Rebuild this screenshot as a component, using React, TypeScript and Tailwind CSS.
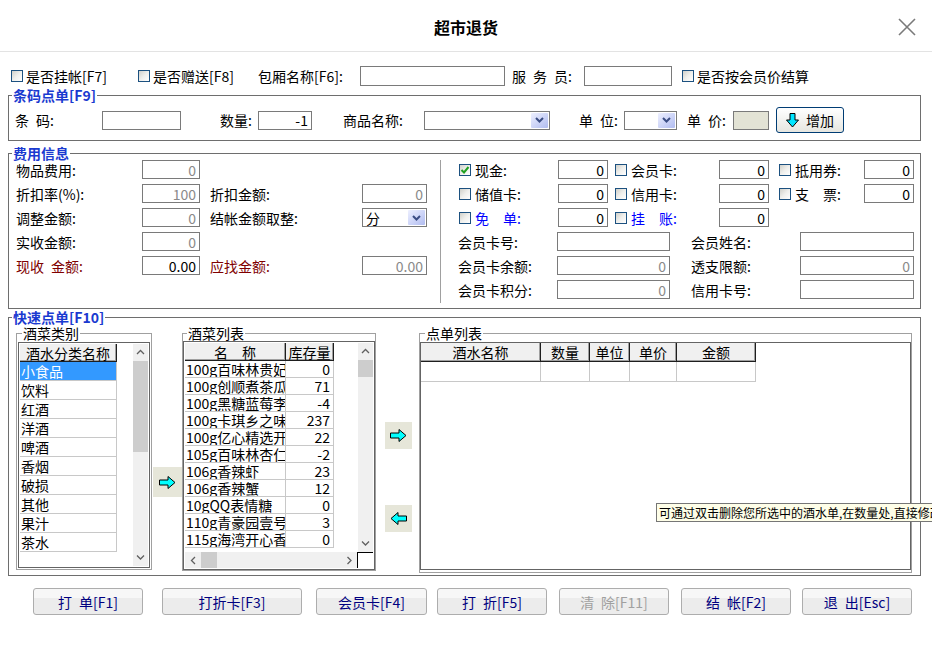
import React from 'react';

const CATEGORIES = ['小食品', '饮料', '红酒', '洋酒', '啤酒', '香烟', '破损', '其他', '果汁', '茶水'];

const ITEMS: [string, string][] = [
  ['100g百味林贵妃小核桃', '0'],
  ['100g创顺煮茶瓜子', '71'],
  ['100g黑糖蓝莓李子', '-4'],
  ['100g卡琪乡之味梅', '237'],
  ['100g亿心精选开心果', '22'],
  ['105g百味林杏仁', '-2'],
  ['106g香辣虾', '23'],
  ['106g香辣蟹', '12'],
  ['10gQQ表情糖', '0'],
  ['110g青豪园壹号花生', '3'],
  ['115g海湾开心香瓜子', '0'],
];

// header cell of a list view; height comes from the row it sits in
const HEAD =
  'shrink-0 bg-[#f0f0f0] border-r border-b border-[#1e1e1e] shadow-[inset_-1px_-1px_0_#a0a0a0] flex items-center justify-center';
const CELL = 'shrink-0 border-r border-b border-[#c8c8c8]';
const BIG_LEGEND = 'ml-[3px] px-[1px] text-[14px] leading-[14px] font-bold text-[#1a3ad0]';
const SMALL_LEGEND = 'px-[1px] text-[14px] leading-[14px]';

function Check({ checked }: { checked?: boolean }) {
  return (
    <span className="inline-flex items-center justify-center w-[12px] h-[12px] shrink-0 border border-[#1c5180] bg-linear-to-br from-[#d0d0ca] via-[#efefec] to-white">
      {checked && (
        <svg width="10" height="10" viewBox="0 0 10 10">
          <path d="M1.5 5L4 7.5L8.5 2" stroke="#21a121" strokeWidth="2" fill="none" />
        </svg>
      )}
    </span>
  );
}

function Field({ className = '', value, muted }: { className?: string; value?: string; muted?: boolean }) {
  return (
    <div
      className={`h-[19px] shrink-0 border border-[#7a7a7a] flex items-center justify-end pr-[3px] leading-none ${
        muted ? 'text-[#8a8a8a]' : 'text-black'
      } ${className}`}
    >
      {value}
    </div>
  );
}

function Combo({ className = '', value }: { className?: string; value?: string }) {
  return (
    <div className={`h-[19px] shrink-0 border border-[#7a7a7a] bg-white flex items-center ${className}`}>
      <span className="flex-1 pl-[3px] leading-none">{value}</span>
      <span className="w-[17px] h-[15px] mr-[1px] rounded-[1px] bg-linear-to-br from-[#eef0ff] to-[#b1bcf0] flex items-center justify-center">
        <svg width="9" height="6" viewBox="0 0 9 6">
          <path d="M1 1L4.5 4.5L8 1" stroke="#3b4d84" strokeWidth="2" fill="none" />
        </svg>
      </span>
    </div>
  );
}

function Chev({ dir }: { dir: 'up' | 'down' | 'left' | 'right' }) {
  const d = {
    up: 'M1 5L4.5 1.5L8 5',
    down: 'M1 1.5L4.5 5L8 1.5',
    left: 'M5 1L1.5 4.5L5 8',
    right: 'M1.5 1L5 4.5L1.5 8',
  }[dir];
  const horiz = dir === 'left' || dir === 'right';
  return (
    <svg width={horiz ? 7 : 9} height={horiz ? 9 : 7} viewBox={horiz ? '0 0 7 9' : '0 0 9 7'}>
      <path d={d} stroke="#606060" strokeWidth="1.3" fill="none" />
    </svg>
  );
}

function VScroll({ thumb }: { thumb: string }) {
  return (
    <div className="w-[15px] shrink-0 bg-[#f0f0f0] flex flex-col">
      <div className="h-[17px] shrink-0 flex items-center justify-center">
        <Chev dir="up" />
      </div>
      <div className={`${thumb} shrink-0 bg-[#cdcdcd]`} />
      <div className="flex-1" />
      <div className="h-[17px] shrink-0 flex items-center justify-center">
        <Chev dir="down" />
      </div>
    </div>
  );
}

function ArrowRight() {
  return (
    <svg width="17" height="13" viewBox="0 0 17 13">
      <polygon points="0.5,4 9,4 9,0.5 16,6.5 9,12.5 9,9 0.5,9" fill="#00ffff" stroke="#000" strokeWidth="1" />
    </svg>
  );
}

function ArrowLeft() {
  return (
    <svg width="17" height="13" viewBox="0 0 17 13">
      <polygon points="16.5,4 8,4 8,0.5 1,6.5 8,12.5 8,9 16.5,9" fill="#00ffff" stroke="#000" strokeWidth="1" />
    </svg>
  );
}

function Btn({ className = '', label, disabled }: { className?: string; label: string; disabled?: boolean }) {
  return (
    <div
      className={`h-[27px] shrink-0 rounded-[3px] border border-[#adadad] bg-[linear-gradient(#f7f7f7_0%,#f7f7f7_35%,#ececec_35%,#ececec_100%)] flex items-center justify-center ${
        disabled ? 'text-[#a0a0a0]' : 'text-[#000080]'
      } ${className}`}
    >
      {label}
    </div>
  );
}

export default function App() {
  return (
    <div className="relative w-[932px] h-[649px] overflow-hidden bg-white text-black text-[14px] leading-[16px] font-['Noto_Sans_CJK_SC',sans-serif]">
      {/* Title bar */}
      <div className="h-[52px] border-b border-[#e3e3e3] grid grid-cols-[1fr_auto_1fr] items-center">
        <div />
        <div className="text-[16px] font-bold leading-[20px] mt-[2px]">超市退货</div>
        <div className="flex justify-end pr-[16px] mt-[2px]">
          <svg width="18" height="18" viewBox="0 0 18 18">
            <path d="M1 1L17 17M17 1L1 17" stroke="#7a7a7a" strokeWidth="1.6" />
          </svg>
        </div>
      </div>

      {/* Options row */}
      <div className="mt-[14px] h-[20px] flex items-center">
        <div className="ml-[11px] w-[127px] shrink-0 flex items-center gap-[3px]">
          <Check />
          <span>是否挂帐[F7]</span>
        </div>
        <div className="w-[120px] shrink-0 flex items-center gap-[3px]">
          <Check />
          <span>是否赠送[F8]</span>
        </div>
        <span className="w-[102px] shrink-0">包厢名称[F6]:</span>
        <Field className="w-[145px] h-[20px]" />
        <span className="ml-[7px] w-[72px] shrink-0">{'服\u2002务\u2002员:'}</span>
        <Field className="w-[88px] h-[20px]" />
        <div className="ml-[10px] flex items-center gap-[3px]">
          <Check />
          <span>是否按会员价结算</span>
        </div>
      </div>

      {/* 条码点单 */}
      <fieldset className="ml-[8px] mt-[2px] w-[913px] h-[53px] border border-[#6e6e6e]">
        <legend className={BIG_LEGEND}>条码点单[F9]</legend>
        <div className="mt-[5px] h-[26px] flex items-center">
          <span className="ml-[6px] w-[87px] shrink-0">{'条\u2002码:'}</span>
          <Field className="w-[79px]" />
          <span className="ml-[39px] w-[38px] shrink-0">数量:</span>
          <Field className="w-[54px]" value="-1" />
          <span className="ml-[31px] w-[81px] shrink-0">商品名称:</span>
          <Combo className="w-[126px]" />
          <span className="ml-[29px] w-[45px] shrink-0">{'单\u2002位:'}</span>
          <Combo className="w-[53px]" />
          <span className="ml-[10px] w-[46px] shrink-0">{'单\u2002价:'}</span>
          <Field className="w-[36px] bg-[#e3e3d5]" />
          <div className="ml-[7px] w-[68px] h-[26px] rounded-[3px] border border-[#003c74] bg-linear-to-b from-white to-[#e6e6e0] flex items-center justify-center gap-[7px]">
            <svg width="13" height="15" viewBox="0 0 13 15">
              <polygon points="4,0.5 9,0.5 9,7 12.5,7 6.5,14 0.5,7 4,7" fill="#00e5ff" stroke="#000" strokeWidth="1" />
            </svg>
            <span>增加</span>
          </div>
        </div>
      </fieldset>

      {/* 费用信息 */}
      <fieldset className="ml-[8px] mt-[5px] w-[913px] h-[163px] border border-[#6e6e6e]">
        <legend className={BIG_LEGEND}>费用信息</legend>
        <div className="flex">
          <div className="w-[431px] shrink-0 pl-[7px] flex flex-col gap-[5px]">
            <div className="h-[19px] flex items-center">
              <span className="w-[126px] shrink-0">物品费用:</span>
              <Field className="w-[58px]" value="0" muted />
            </div>
            <div className="h-[19px] flex items-center">
              <span className="w-[126px] shrink-0">折扣率(%):</span>
              <Field className="w-[58px]" value="100" muted />
              <span className="ml-[10px] w-[152px] shrink-0">折扣金额:</span>
              <Field className="w-[65px]" value="0" muted />
            </div>
            <div className="h-[19px] flex items-center">
              <span className="w-[126px] shrink-0">调整金额:</span>
              <Field className="w-[58px]" value="0" muted />
              <span className="ml-[10px] w-[152px] shrink-0">结帐金额取整:</span>
              <Combo className="w-[65px]" value="分" />
            </div>
            <div className="h-[19px] flex items-center">
              <span className="w-[126px] shrink-0">实收金额:</span>
              <Field className="w-[58px]" value="0" muted />
            </div>
            <div className="h-[19px] flex items-center">
              <span className="w-[126px] shrink-0 text-[#800000]">{'现收\u2002金额:'}</span>
              <Field className="w-[58px]" value="0.00" />
              <span className="ml-[10px] w-[152px] shrink-0 text-[#800000]">应找金额:</span>
              <Field className="w-[65px]" value="0.00" muted />
            </div>
          </div>

          <div className="w-px h-[143px] shrink-0 bg-[#a0a0a0]" />

          <div className="pl-[18px] flex flex-col gap-[5px]">
            <div className="h-[19px] flex items-center">
              <div className="w-[99px] shrink-0 flex items-center gap-[4px]">
                <Check checked />
                <span>现金:</span>
              </div>
              <Field className="w-[50px]" value="0" />
              <div className="ml-[7px] w-[104px] shrink-0 flex items-center gap-[4px]">
                <Check />
                <span>会员卡:</span>
              </div>
              <Field className="w-[50px]" value="0" />
              <div className="ml-[10px] w-[85px] shrink-0 flex items-center gap-[4px]">
                <Check />
                <span>抵用券:</span>
              </div>
              <Field className="w-[50px]" value="0" />
            </div>
            <div className="h-[19px] flex items-center">
              <div className="w-[99px] shrink-0 flex items-center gap-[4px]">
                <Check />
                <span>储值卡:</span>
              </div>
              <Field className="w-[50px]" value="0" />
              <div className="ml-[7px] w-[104px] shrink-0 flex items-center gap-[4px]">
                <Check />
                <span>信用卡:</span>
              </div>
              <Field className="w-[50px]" value="0" />
              <div className="ml-[10px] w-[85px] shrink-0 flex items-center gap-[4px]">
                <Check />
                <span>{'支\u3000票:'}</span>
              </div>
              <Field className="w-[50px]" value="0" />
            </div>
            <div className="h-[19px] flex items-center">
              <div className="w-[99px] shrink-0 flex items-center gap-[4px]">
                <Check />
                <span className="text-[#0000ff]">{'免\u3000单:'}</span>
              </div>
              <Field className="w-[50px]" value="0" />
              <div className="ml-[7px] w-[104px] shrink-0 flex items-center gap-[4px]">
                <Check />
                <span className="text-[#0000ff]">{'挂\u3000账:'}</span>
              </div>
              <Field className="w-[50px]" value="0" />
            </div>
            <div className="h-[19px] -ml-[1px] flex items-center">
              <span className="w-[99px] shrink-0">会员卡号:</span>
              <Field className="w-[113px]" />
              <span className="ml-[21px] w-[109px] shrink-0">会员姓名:</span>
              <Field className="w-[114px]" />
            </div>
            <div className="h-[19px] -ml-[1px] flex items-center">
              <span className="w-[99px] shrink-0">会员卡余额:</span>
              <Field className="w-[113px]" value="0" muted />
              <span className="ml-[21px] w-[109px] shrink-0">透支限额:</span>
              <Field className="w-[114px]" value="0" muted />
            </div>
            <div className="h-[19px] -ml-[1px] flex items-center">
              <span className="w-[99px] shrink-0">会员卡积分:</span>
              <Field className="w-[113px]" value="0" muted />
              <span className="ml-[21px] w-[109px] shrink-0">信用卡号:</span>
              <Field className="w-[114px]" />
            </div>
          </div>
        </div>
      </fieldset>

      {/* 快速点单 */}
      <fieldset className="ml-[8px] mt-[1px] w-[913px] h-[266px] border border-[#6e6e6e]">
        <legend className={BIG_LEGEND}>快速点单[F10]</legend>
        <div className="pl-[7px] pt-[2px] flex items-start">
          {/* 酒菜类别 */}
          <fieldset className="w-[136px] h-[244px] shrink-0 border border-[#a0a0a0]">
            <legend className={`ml-[5px] ${SMALL_LEGEND}`}>酒菜类别</legend>
            <div className="mx-[1px] mt-[2px] h-[226px] border border-[#646464] p-[1px] flex">
              <div className="w-[97px] shrink-0 flex flex-col">
                <div className={`${HEAD} h-[18px]`}>酒水分类名称</div>
                {CATEGORIES.map((c, i) => (
                  <div
                    key={c}
                    className={`${CELL} h-[19px] pl-[1px] flex items-center ${i === 0 ? 'bg-[#3399ff] text-white' : ''}`}
                  >
                    {c}
                  </div>
                ))}
              </div>
              <div className="flex-1" />
              <VScroll thumb="h-[91px]" />
            </div>
          </fieldset>

          <div className="ml-[1px] mt-[141px] w-[29px] h-[30px] shrink-0 bg-[#e6e6d9] flex items-center justify-center">
            <ArrowRight />
          </div>

          {/* 酒菜列表 */}
          <fieldset className="w-[194px] h-[245px] shrink-0 border border-[#a0a0a0]">
            <legend className={`ml-[4px] ${SMALL_LEGEND}`}>酒菜列表</legend>
            <div className="mt-[1px] h-[229px] border border-[#646464] p-[1px] flex flex-col">
              <div className="flex-1 min-h-0 flex">
                <div className="w-[149px] shrink-0 flex flex-col">
                  <div className="h-[18px] shrink-0 flex">
                    <div className={`${HEAD} w-[101px]`}>{'名\u3000称'}</div>
                    <div className={`${HEAD} w-[48px]`}>库存量</div>
                  </div>
                  {ITEMS.map(([name, qty]) => (
                    <div key={name} className="h-[17px] shrink-0 flex">
                      <div className={`${CELL} w-[101px] pl-[1px] overflow-hidden whitespace-nowrap flex items-center`}>{name}</div>
                      <div className={`${CELL} w-[48px] pr-[3px] flex items-center justify-end`}>{qty}</div>
                    </div>
                  ))}
                </div>
                <div className="flex-1" />
                <VScroll thumb="h-[17px]" />
              </div>
              <div className="h-[16px] shrink-0 flex">
                <div className="flex-1 bg-[#f0f0f0] flex">
                  <div className="w-[16px] flex items-center justify-center">
                    <Chev dir="left" />
                  </div>
                  <div className="w-[16px] bg-[#cdcdcd]" />
                  <div className="flex-1" />
                  <div className="w-[16px] flex items-center justify-center">
                    <Chev dir="right" />
                  </div>
                </div>
                <div className="w-[16px] border-l border-t border-black bg-white" />
              </div>
            </div>
          </fieldset>

          <div className="ml-[9px] w-[27px] shrink-0 flex flex-col">
            <div className="mt-[96px] h-[27px] bg-[#e6e6d9] flex items-center justify-center">
              <ArrowRight />
            </div>
            <div className="mt-[56px] h-[27px] bg-[#e6e6d9] flex items-center justify-center">
              <ArrowLeft />
            </div>
          </div>

          {/* 点单列表 */}
          <fieldset className="ml-[7px] w-[493px] h-[247px] shrink-0 border border-[#a0a0a0]">
            <legend className={`ml-[5px] ${SMALL_LEGEND}`}>点单列表</legend>
            <div className="mt-[2px] h-[228px] border border-[#646464] bg-white">
              <div className="h-[19px] flex">
                <div className={`${HEAD} w-[120px]`}>酒水名称</div>
                <div className={`${HEAD} w-[49px]`}>数量</div>
                <div className={`${HEAD} w-[40px]`}>单位</div>
                <div className={`${HEAD} w-[47px]`}>单价</div>
                <div className={`${HEAD} w-[79px]`}>金额</div>
              </div>
              <div className="h-[20px] flex">
                <div className={`${CELL} w-[120px]`} />
                <div className={`${CELL} w-[49px]`} />
                <div className={`${CELL} w-[40px]`} />
                <div className={`${CELL} w-[47px]`} />
                <div className={`${CELL} w-[79px]`} />
              </div>
            </div>
          </fieldset>
        </div>
      </fieldset>

      {/* Buttons */}
      <div className="mt-[12px] flex">
        <Btn className="ml-[33px] w-[110px]" label={'打\u2002单[F1]'} />
        <Btn className="ml-[19px] w-[140px]" label="打折卡[F3]" />
        <Btn className="ml-[14px] w-[111px]" label="会员卡[F4]" />
        <Btn className="ml-[10px] w-[110px]" label={'打\u2002折[F5]'} />
        <Btn className="ml-[12px] w-[110px]" label={'清\u2002除[F11]'} disabled />
        <Btn className="ml-[12px] w-[110px]" label={'结\u2002帐[F2]'} />
        <Btn className="ml-[11px] w-[110px]" label={'退\u2002出[Esc]'} />
      </div>

      {/* Tooltip */}
      <div className="absolute left-[656px] top-[503px] h-[19px] px-[2px] border border-[#767676] bg-[#fefee8] text-[12px] leading-[17px] whitespace-nowrap">
        可通过双击删除您所选中的酒水单,在数量处,直接修改数量
      </div>
    </div>
  );
}
